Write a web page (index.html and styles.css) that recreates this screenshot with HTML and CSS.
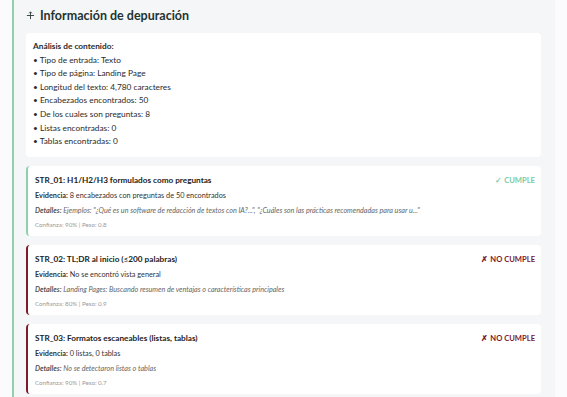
FILE: index.html
```html
<!DOCTYPE html>
<html lang="es">
<head>
    <meta charset="UTF-8">
    <meta name="viewport" content="width=device-width, initial-scale=1.0">
    <title>Información de depuración</title>
    <link rel="stylesheet" href="styles.css">
</head>
<body>
    <!-- Panel de depuración -->
    <div class="debug-panel">
        <h2 class="debug-title">
            <svg class="debug-icon" viewBox="0 0 10 10" width="10" height="10">
                <path d="M5 1 V9 M1 5 H9 M3.5 2.5 L5 1 L6.5 2.5" stroke="#2b3a36" stroke-width="1" fill="none"/>
            </svg>
            Información de depuración
        </h2>

        <!-- Resumen del contenido -->
        <div class="summary-card">
            <p class="summary-head">Análisis de contenido:</p>
            <ul class="summary-list">
                <li>• Tipo de entrada: Texto</li>
                <li>• Tipo de página: Landing Page</li>
                <li>• Longitud del texto: 4,780 caracteres</li>
                <li>• Encabezados encontrados: 50</li>
                <li>• De los cuales son preguntas: 8</li>
                <li>• Listas encontradas: 0</li>
                <li>• Tablas encontradas: 0</li>
            </ul>
        </div>

        <!-- Reglas -->
        <div class="rule-card pass">
            <div class="rule-head">
                <span class="rule-name">STR_01: H1/H2/H3 formulados como preguntas</span>
                <span class="rule-status">✓ CUMPLE</span>
            </div>
            <p class="rule-evidence"><b>Evidencia:</b> 8 encabezados con preguntas de 50 encontrados</p>
            <p class="rule-details"><b>Detalles:</b> Ejemplos: "¿Qué es un software de redacción de textos con IA?...", "¿Cuáles son las prácticas recomendadas para usar u..."</p>
            <p class="rule-meta">Confianza: 90% | Peso: 0.8</p>
        </div>

        <div class="rule-card fail">
            <div class="rule-head">
                <span class="rule-name">STR_02: TL;DR al inicio (≤200 palabras)</span>
                <span class="rule-status">✗ NO CUMPLE</span>
            </div>
            <p class="rule-evidence"><b>Evidencia:</b> No se encontró vista general</p>
            <p class="rule-details"><b>Detalles:</b> Landing Pages: Buscando resumen de ventajas o características principales</p>
            <p class="rule-meta">Confianza: 80% | Peso: 0.9</p>
        </div>

        <div class="rule-card fail">
            <div class="rule-head">
                <span class="rule-name">STR_03: Formatos escaneables (listas, tablas)</span>
                <span class="rule-status">✗ NO CUMPLE</span>
            </div>
            <p class="rule-evidence"><b>Evidencia:</b> 0 listas, 0 tablas</p>
            <p class="rule-details"><b>Detalles:</b> No se detectaron listas o tablas</p>
            <p class="rule-meta">Confianza: 90% | Peso: 0.7</p>
        </div>
    </div>
</body>
</html>
```

FILE: styles.css
```css
/* Base */
body {
    font-family: Lato, "Noto Sans", sans-serif;
    margin: 0;
    padding: 0;
    background-color: #fbfbfd;
    color: #2b2b2b;
}

/* Panel */
.debug-panel {
    margin-left: 12px;
    width: 515px;
    border-left: 2px solid #8fcfac;
    background-color: #f5f6f8;
    padding: 5px 14px 4px 12px;
}

.debug-title {
    display: flex;
    align-items: center;
    gap: 5px;
    margin: 0 0 8px 0;
    font-size: 12.5px;
    font-weight: 700;
    color: #1f342f;
    height: 20px;
}

.debug-icon {
    width: 9px;
    height: 9px;
}

/* Resumen */
.summary-card {
    background-color: #fff;
    border-radius: 4px;
    padding: 7px 7px 8px 7px;
    margin-bottom: 9px;
}

.summary-head {
    margin: 0;
    font-size: 8.3px;
    font-weight: 700;
    line-height: 13.6px;
}

.summary-list {
    list-style: none;
    margin: 0;
    padding: 0;
}

.summary-list li {
    font-size: 8.3px;
    line-height: 13.6px;
}

/* Reglas */
.rule-card {
    background-color: #fff;
    border-radius: 4px;
    border-left: 2px solid #8fcfac;
    padding: 8px 6px 5px 7px;
    margin-bottom: 9px;
}

.rule-card.fail {
    border-left-color: #7d1a2c;
}

.rule-head {
    display: flex;
    justify-content: space-between;
    align-items: center;
    height: 13px;
    margin-bottom: 2px;
}

.rule-name {
    font-size: 8.2px;
    font-weight: 700;
    color: #222;
}

.rule-status {
    font-size: 7.6px;
    font-weight: 700;
}

.pass .rule-status {
    color: #7ccca3;
}

.fail .rule-status {
    color: #7d1a2c;
}

.rule-card p {
    margin: 0;
}

.rule-evidence {
    font-size: 7.3px;
    line-height: 14px;
    color: #333;
}

.rule-details {
    font-size: 7.2px;
    line-height: 15px;
    font-style: italic;
    color: #666;
}

.rule-details b {
    color: #555;
}

.rule-meta {
    font-size: 6.2px;
    line-height: 13px;
    color: #999;
}
```
